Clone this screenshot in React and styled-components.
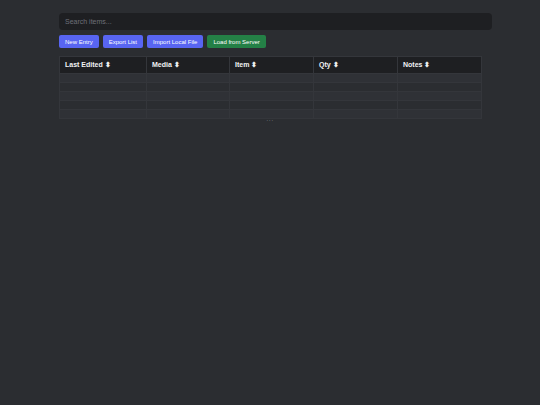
import React from "react";
import styled, { createGlobalStyle } from "styled-components";

const GlobalStyle = createGlobalStyle`
  html, body {
    margin: 0;
    padding: 0;
    background: #2b2d31;
    font-family: "Liberation Sans", Arial, sans-serif;
  }
`;

const Page = styled.div`
  min-height: 405px;
  padding: 13px 0 0 59px;
  box-sizing: border-box;
`;

const Wrap = styled.div`
  width: 433px;
`;

const Search = styled.input`
  display: block;
  width: 100%;
  height: 17px;
  box-sizing: border-box;
  background: #1e1f22;
  border: none;
  border-radius: 4px;
  padding: 0 6px;
  color: #dbdee1;
  font-family: inherit;
  font-size: 7px;
  outline: none;
  &::placeholder {
    color: #6d6f78;
  }
`;

const Toolbar = styled.div`
  display: flex;
  gap: 4px;
  margin-top: 5px;
`;

const Button = styled.button`
  height: 13px;
  padding: 0 6px;
  border: none;
  border-radius: 2px;
  background: ${(p) => (p.$green ? "#248046" : "#5865f2")};
  color: #fff;
  font-family: inherit;
  font-size: 6px;
  cursor: pointer;
`;

const TableWrap = styled.div`
  width: 422px;
  margin-top: 8px;
`;

const Table = styled.table`
  width: 100%;
  border-collapse: collapse;
  table-layout: fixed;
  font-size: 7px;
  color: #f2f3f5;
`;

const Th = styled.th`
  height: 16px;
  padding: 0 5px;
  text-align: left;
  font-weight: bold;
  background: #1e1f22;
  border: 1px solid #34363b;
  cursor: pointer;
`;

const Tr = styled.tr`
  background: ${(p) => (p.$odd ? "#2f3136" : "#2b2d31")};
`;

const Td = styled.td`
  height: 8px;
  padding: 0;
  border: 1px solid #34363b;
`;

const Grip = styled.div`
  text-align: center;
  color: #9a9ca3;
  font-size: 6px;
  line-height: 3px;
  letter-spacing: 0.5px;
`;

const columns = ["Last Edited", "Media", "Item", "Qty", "Notes"];
const widths = [87, 83, 84, 84, 84];

export default function App() {
  return (
    <>
      <GlobalStyle />
      <Page>
        <Wrap>
          <Search placeholder="Search items..." />
          <Toolbar>
            <Button>New Entry</Button>
            <Button>Export List</Button>
            <Button>Import Local File</Button>
            <Button $green>Load from Server</Button>
          </Toolbar>
          <TableWrap>
            <Table>
              <colgroup>
                {widths.map((w, i) => (
                  <col key={i} style={{ width: w }} />
                ))}
              </colgroup>
              <thead>
                <tr>
                  {columns.map((c) => (
                    <Th key={c}>{c} ⬍</Th>
                  ))}
                </tr>
              </thead>
              <tbody>
                {[0, 1, 2, 3, 4].map((r) => (
                  <Tr key={r} $odd={r % 2 === 0}>
                    {columns.map((c) => (
                      <Td key={c} />
                    ))}
                  </Tr>
                ))}
              </tbody>
            </Table>
            <Grip>···</Grip>
          </TableWrap>
        </Wrap>
      </Page>
    </>
  );
}
